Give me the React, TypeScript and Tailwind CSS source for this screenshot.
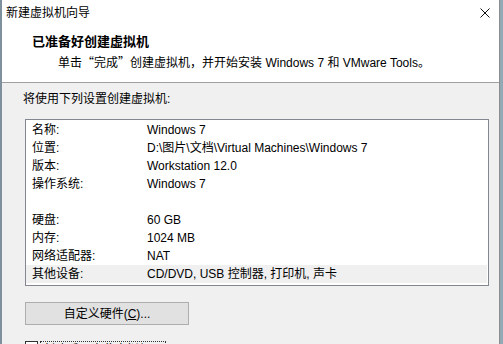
import React from 'react';

interface Setting {
  label: string;
  value: string;
}

const FONT = "font-['Liberation_Sans','Noto_Sans_CJK_SC',sans-serif]";

const topSettings: Setting[] = [
  { label: '名称:', value: 'Windows 7' },
  { label: '位置:', value: 'D:\\图片\\文档\\Virtual Machines\\Windows 7' },
  { label: '版本:', value: 'Workstation 12.0' },
  { label: '操作系统:', value: 'Windows 7' },
];

const hardware: Setting[] = [
  { label: '硬盘:', value: '60 GB' },
  { label: '内存:', value: '1024 MB' },
  { label: '网络适配器:', value: 'NAT' },
  { label: '其他设备:', value: 'CD/DVD, USB 控制器, 打印机, 声卡' },
];

function Row({ item, selected }: { item: Setting; selected?: boolean }) {
  return (
    <div
      className={`grid grid-cols-[115px_1fr] h-[18px] items-center pl-[6px] whitespace-nowrap ${
        selected ? 'bg-[#f0f0f0]' : ''
      }`}
    >
      <span>{item.label}</span>
      <span>{item.value}</span>
    </div>
  );
}

// full-width CJK quote marks
function Q({ children }: { children: React.ReactNode }) {
  return (
    <span className="font-['Noto_Sans_CJK_SC',sans-serif] [font-feature-settings:'fwid']">{children}</span>
  );
}

export default function App() {
  return (
    <div lang="zh-CN" className={`w-[503px] h-[344px] overflow-hidden flex items-stretch text-[12px] leading-[16px] text-black ${FONT}`}>
      <div className="w-[2px] shrink-0 bg-[#7d909c]" />

      <div className="flex-1 bg-[#f0f0f0]">
        {/* title bar */}
        <div className="h-[26px] bg-white flex items-center justify-between pl-[4px] pr-[9px]">
          <span>新建虚拟机向导</span>
          <svg width="10" height="10" viewBox="0 0 10 10">
            <path d="M0.5 0.5 L9.5 9.5 M9.5 0.5 L0.5 9.5" stroke="#111" strokeWidth="1" />
          </svg>
        </div>

        {/* header */}
        <div className="h-[57px] bg-white border-b border-[#a0a0a0] pt-[8px] pl-[30px]">
          <div className="text-[13px] font-bold leading-[16px]">已准备好创建虚拟机</div>
          <div className="mt-[4px] pl-[26px] whitespace-nowrap">
            单击<Q>“</Q>完成<Q>”</Q>创建虚拟机，并开始安装 Windows 7 和 VMware Tools。
          </div>
        </div>

        {/* body */}
        <div className="pt-[8px]">
          <div className="pl-[21px]">将使用下列设置创建虚拟机:</div>

          <div className="mt-[12px] ml-[23px] w-[464px] border border-[#828790] bg-white pt-px pb-[2px] pr-[1px]">
            {topSettings.map((s) => (
              <Row key={s.label} item={s} />
            ))}
            <div className="h-[18px]" />
            {hardware.map((s, i) => (
              <Row key={s.label} item={s} selected={i === hardware.length - 1} />
            ))}
          </div>

          <button className="mt-[16px] ml-[23px] w-[164px] h-[23px] bg-[#e1e1e1] border border-[#adadad] flex items-center justify-center">
            <span>
              自定义硬件(<span className="underline">C</span>)...
            </span>
          </button>

          <div className="mt-[16px] ml-[23px] flex items-start gap-[2px] whitespace-nowrap">
            <div className="w-[13px] h-[13px] bg-white border border-[#333]" />
            <div className="border border-dotted border-[#333] px-[2px] w-[126px]">
              创建后开启此虚拟机(<span className="underline">P</span>)
            </div>
          </div>
        </div>
      </div>

      <div className="w-px shrink-0 bg-[#8c8c8c]" />
      <div className="w-[3px] shrink-0 bg-[#93a9b6]" />
    </div>
  );
}
